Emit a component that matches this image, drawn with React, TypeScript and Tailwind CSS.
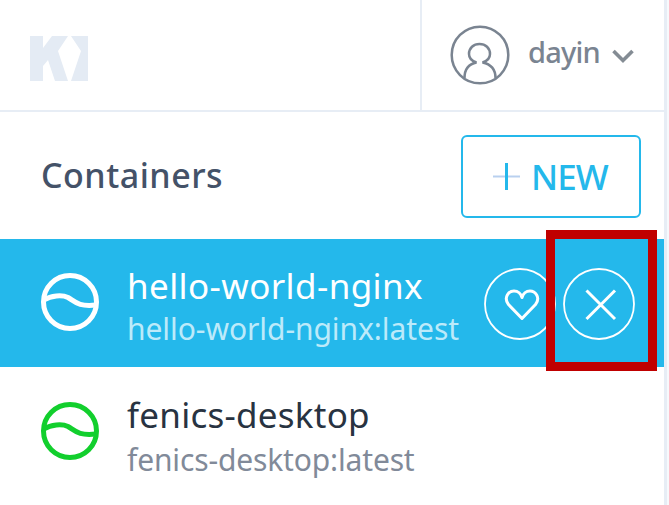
import type { ReactNode } from "react";

function KitematicLogo() {
  return (
    <svg width="58" height="45" viewBox="0 0 58 45" className="fill-[#e4ebf4]">
      <path d="M0 0H13V12L22 0H38L28 15L38 45H25L18 24L13 30V45H0Z" />
      <path d="M41 0H58V45H41L51 15Z" />
    </svg>
  );
}

function UserIcon() {
  return (
    <svg width="60" height="60" viewBox="0 0 60 60" fill="none" stroke="#7a8491" strokeWidth="2.5">
      <circle cx="30" cy="30" r="28.3" />
      <path d="M14.500 53C14.500 44 19 39 26.500 37.500C21.500 36 19 33 19 29C19 23 23.500 19 29.500 19S40 23 40 29C40 33 37.500 36 32.500 37.500C40 39 45.500 44 45.500 53" />
    </svg>
  );
}

function ContainerIcon({ color }: { color: string }) {
  return (
    <svg width="60" height="60" viewBox="0 0 60 60" fill="none" stroke={color} strokeWidth="5">
      <circle cx="30" cy="30" r="26.5" />
      <path d="M4 28C11 23.500 22 22.500 28 25.500C35 29.500 38 35 56 33" />
    </svg>
  );
}

function RoundButton({ label, children }: { label: string; children: ReactNode }) {
  return (
    <button aria-label={label} className="size-[72px] shrink-0">
      <svg width="72" height="72" viewBox="0 0 72 72" fill="none" stroke="white">
        <circle cx="36" cy="36" r="35" strokeWidth="1.8" />
        {children}
      </svg>
    </button>
  );
}

export default function App() {
  return (
    <div className="flex h-[505px] w-[669px] overflow-hidden bg-white font-['Noto_Sans','Open_Sans',sans-serif] whitespace-nowrap">
      <div className="relative flex w-[664px] shrink-0 flex-col">
        <header className="flex h-[112px] shrink-0 border-b-2 border-[#e7edf5]">
          <div className="w-[420px] pt-9 pl-[30px]">
            <KitematicLogo />
          </div>
          <div className="flex flex-1 items-center border-l-2 border-[#e7edf5] pl-[28px]">
            <UserIcon />
            <span className="-mt-[6px] ml-[18px] w-[84px] text-[29px] leading-[40px] font-medium tracking-[-0.8px] text-[#7a8491]">dayin</span>
            <svg className="mt-[2px]" width="22" height="16" viewBox="0 0 22 16" fill="none" stroke="#848c94" strokeWidth="3.6">
              <path d="M1.500 3L11 12.500L20.500 3" />
            </svg>
          </div>
        </header>

        <div className="flex h-[127px] shrink-0 items-start justify-between pt-[23px] pr-[23px] pl-[41px]">
          <h1 className="pt-[16px] text-[34px] leading-[48px] font-medium tracking-[0.5px] text-[#445268]">Containers</h1>
          <button className="flex h-[83px] w-[180px] items-center rounded-[6px] border-2 border-[#24b8eb] pl-[30px] text-[#24b8eb]">
            <svg width="27" height="27" viewBox="0 0 27 27">
              <path d="M0 13.500H27" stroke="#b9d0ef" strokeWidth="2" />
              <path d="M13.500 0V27" stroke="#24b8eb" strokeWidth="3" />
            </svg>
            <span className="ml-[11px] text-[35px] leading-[48px] font-medium tracking-[-1px]">NEW</span>
          </button>
        </div>

        <ul>
          <li className="flex h-[128px] bg-[#24b8eb] pl-[40px] text-white">
            <div className="pt-[33px]">
              <ContainerIcon color="#ffffff" />
            </div>
            <div className="ml-[27px] w-[357px] pt-[23px]">
              <div className="text-[35px] leading-[48px] tracking-[0.4px]">hello-world-nginx</div>
              <div className="-mt-[2px] text-[30px] leading-[42px] tracking-[-0.06px] text-[#bceafa]">hello-world-nginx:latest</div>
            </div>
            <div className="flex gap-[7px] pt-[29px]">
              <RoundButton label="Favorite">
                <path d="M38 50.500L24.500 36.500C19 29 25 23 30 23C34 23 37 26 38 29.500C39 26 42 23 46 23C51 23 57 29 51.500 36.500Z" strokeWidth="3" strokeLinejoin="round" />
              </RoundButton>
              <RoundButton label="Delete">
                <path d="M23.500 22.500L52 51M52 22.500L23.500 51" strokeWidth="3" />
              </RoundButton>
            </div>
          </li>
          <li className="flex h-[138px] pl-[40px]">
            <div className="pt-[34px]">
              <ContainerIcon color="#12cf2d" />
            </div>
            <div className="ml-[27px] pt-[24px]">
              <div className="text-[35px] leading-[48px] tracking-[0.25px] text-[#283341]">fenics-desktop</div>
              <div className="text-[30px] leading-[42px] tracking-[-0.15px] text-[#818a99]">fenics-desktop:latest</div>
            </div>
          </li>
        </ul>
        <div className="absolute top-[230px] left-[546px] h-[141px] w-[111px] border-9 border-[#c00000]" />
      </div>
      <div className="w-[5px] border-l-[3px] border-[#e7edf5] bg-[#f7f9fc]" />
    </div>
  );
}
